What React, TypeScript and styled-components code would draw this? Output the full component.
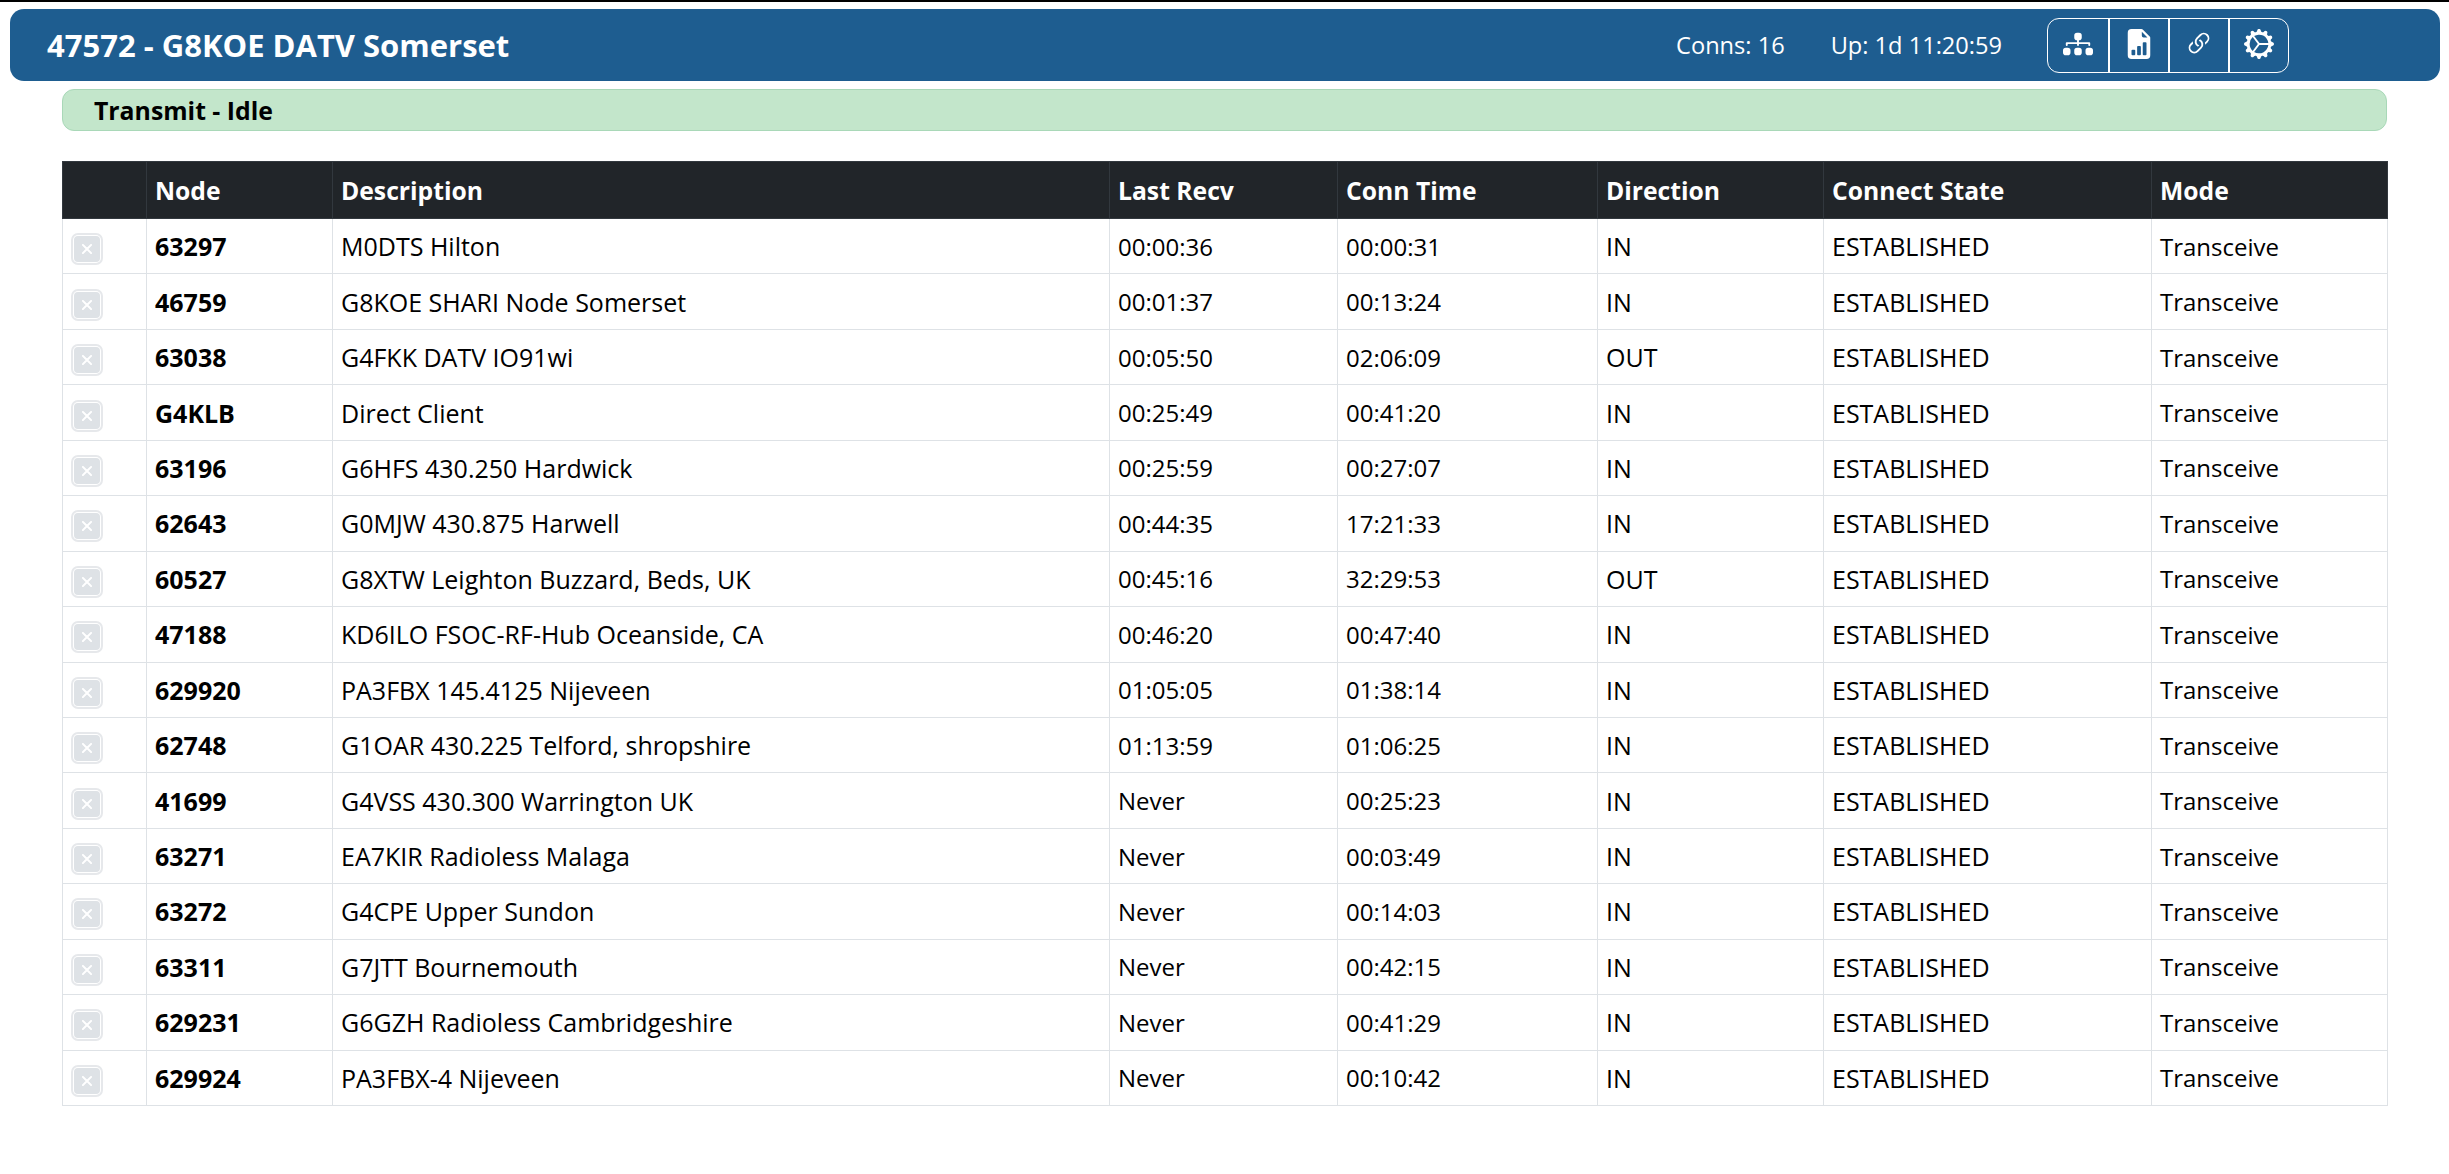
import styled, { createGlobalStyle } from "styled-components";
import { BsDiagram3Fill, BsFileEarmarkBarGraphFill, BsGearWideConnected, BsLink45Deg, BsXLg } from "react-icons/bs";

const GlobalStyle = createGlobalStyle`
  * {
    box-sizing: border-box;
  }
  body {
    margin: 0;
    background: #fff;
    border-top: 2px solid #000;
    font-family: "Open Sans", "Noto Sans", sans-serif;
    font-size: 25px;
    color: #000;
  }
`;

const links = [BsDiagram3Fill, BsFileEarmarkBarGraphFill, BsLink45Deg, BsGearWideConnected];
const columns = [84, 186, 777, 228, 260, 226, 328, 236];
const headings = ["", "Node", "Description", "Last Recv", "Conn Time", "Direction", "Connect State", "Mode"];

const nodes = [
  ["63297", "M0DTS Hilton", "00:00:36", "00:00:31", "IN"],
  ["46759", "G8KOE SHARI Node Somerset", "00:01:37", "00:13:24", "IN"],
  ["63038", "G4FKK DATV IO91wi", "00:05:50", "02:06:09", "OUT"],
  ["G4KLB", "Direct Client", "00:25:49", "00:41:20", "IN"],
  ["63196", "G6HFS 430.250 Hardwick", "00:25:59", "00:27:07", "IN"],
  ["62643", "G0MJW 430.875 Harwell", "00:44:35", "17:21:33", "IN"],
  ["60527", "G8XTW Leighton Buzzard, Beds, UK", "00:45:16", "32:29:53", "OUT"],
  ["47188", "KD6ILO FSOC-RF-Hub Oceanside, CA", "00:46:20", "00:47:40", "IN"],
  ["629920", "PA3FBX 145.4125 Nijeveen", "01:05:05", "01:38:14", "IN"],
  ["62748", "G1OAR 430.225 Telford, shropshire", "01:13:59", "01:06:25", "IN"],
  ["41699", "G4VSS 430.300 Warrington UK", "Never", "00:25:23", "IN"],
  ["63271", "EA7KIR Radioless Malaga", "Never", "00:03:49", "IN"],
  ["63272", "G4CPE Upper Sundon", "Never", "00:14:03", "IN"],
  ["63311", "G7JTT Bournemouth", "Never", "00:42:15", "IN"],
  ["629231", "G6GZH Radioless Cambridgeshire", "Never", "00:41:29", "IN"],
  ["629924", "PA3FBX-4 Nijeveen", "Never", "00:10:42", "IN"],
];

export default function App() {
  return (
    <>
      <GlobalStyle />
      <Page>
        <Header>
          <Title>47572 - G8KOE DATV Somerset</Title>
          <Stats>
            <span>Conns: 16</span>
            <span>Up: 1d 11:20:59</span>
          </Stats>
          <ButtonGroup>
            {links.map((Icon, i) => (
              <IconButton key={i}>
                <Icon />
              </IconButton>
            ))}
          </ButtonGroup>
        </Header>
        <Content>
          <StatusBar>Transmit - Idle</StatusBar>
          <NodeTable>
            <colgroup>
              {columns.map((width, i) => (
                <col key={i} width={width} />
              ))}
            </colgroup>
            <thead>
              <tr>
                {headings.map((heading, i) => (
                  <HeadCell key={i}>{heading}</HeadCell>
                ))}
              </tr>
            </thead>
            <tbody>
              {nodes.map(([node, description, lastRecv, connTime, direction]) => (
                <tr key={node}>
                  <ButtonCell>
                    <DropButton>
                      <BsXLg />
                    </DropButton>
                  </ButtonCell>
                  <NodeCell>{node}</NodeCell>
                  <Cell>{description}</Cell>
                  <NarrowCell>{lastRecv}</NarrowCell>
                  <NarrowCell>{connTime}</NarrowCell>
                  <Cell>{direction}</Cell>
                  <Cell>ESTABLISHED</Cell>
                  <NarrowCell>Transceive</NarrowCell>
                </tr>
              ))}
            </tbody>
          </NodeTable>
        </Content>
      </Page>
    </>
  );
}

const Page = styled.div`
  padding: 7px 9px 69px 10px;
`;

const Header = styled.header`
  display: flex;
  align-items: center;
  height: 72px;
  padding: 0 0 0 37px;
  background: #1e5d90;
  border-radius: 14px;
  color: #fff;
`;

const Title = styled.h1`
  flex: 1;
  margin: 0;
  font-size: 31px;
  font-weight: 700;
`;

const Stats = styled.div`
  display: flex;
  gap: 46px;
  font-size: 23.6px;
`;

const ButtonGroup = styled.div`
  display: flex;
  margin: 0 151px 0 45px;
  height: 55px;
  border: 1px solid #fff;
  border-radius: 12px;
`;

const IconButton = styled.div`
  display: flex;
  align-items: center;
  justify-content: center;
  width: 60px;
  padding-bottom: 3px;
  font-size: 30px;

  & + & {
    border-left: 2px solid #fff;
  }
`;

const Content = styled.main`
  margin: 8px 53px 0 52px;
`;

const StatusBar = styled.div`
  display: flex;
  align-items: center;
  height: 42px;
  padding-left: 31px;
  background: #c3e6cb;
  border: 1px solid #a9d8b8;
  border-radius: 12px;
  font-size: 24.8px;
  font-weight: 700;
`;

const NodeTable = styled.table`
  width: 100%;
  margin-top: 30px;
  table-layout: fixed;
  border-collapse: collapse;
`;

const HeadCell = styled.th`
  height: 57px;
  padding: 0 8px;
  background: #212529;
  border: 1px solid #32383e;
  color: #fff;
  font-size: 24.7px;
  font-weight: 700;
  text-align: left;
`;

const Cell = styled.td`
  height: 55.45px;
  padding: 0 8px;
  border: 1px solid #dee2e6;
  white-space: nowrap;
`;

const NarrowCell = styled(Cell)`
  font-size: 24px;
`;

const NodeCell = styled(Cell)`
  font-weight: 700;
`;

const ButtonCell = styled(Cell)`
  padding: 6px 0 0 11px;
`;

const DropButton = styled.div`
  display: flex;
  align-items: center;
  justify-content: center;
  width: 26px;
  height: 26px;
  background: #dee2e6;
  border-radius: 4px;
  box-shadow: 0 0 0 1px #fff, 0 0 0 3px #e6e8eb;
  color: #fff;
  font-size: 12px;

  svg {
    stroke: currentColor;
    stroke-width: 1.5;
  }
`;
